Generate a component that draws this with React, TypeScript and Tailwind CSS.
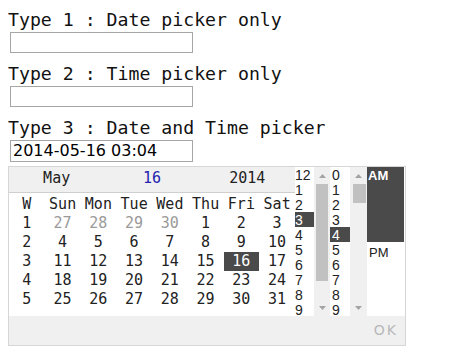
const MONO = "font-['DejaVu_Sans_Mono',monospace]";

const WEEKS = [
  { w: 1, days: [27, 28, 29, 30, 1, 2, 3], muted: 4 },
  { w: 2, days: [4, 5, 6, 7, 8, 9, 10], muted: 0 },
  { w: 3, days: [11, 12, 13, 14, 15, 16, 17], muted: 0 },
  { w: 4, days: [18, 19, 20, 21, 22, 23, 24], muted: 0 },
  { w: 5, days: [25, 26, 27, 28, 29, 30, 31], muted: 0 },
];

const HOURS = ["12", "1", "2", "3", "4", "5", "6", "7", "8", "9"];
const MINUTES = ["0", "1", "2", "3", "4", "5", "6", "7", "8", "9"];

function Arrow({ down }: { down?: boolean }) {
  return (
    <svg width="7" height="4" viewBox="0 0 7 4">
      <path d={down ? "M0 0 L3.5 4 L7 0Z" : "M0 4 L3.5 0 L7 4Z"} fill="#a3a3a3" />
    </svg>
  );
}

function Scrollbar({ width, thumbLeft, thumbWidth, thumbHeight }: { width: string; thumbLeft: string; thumbWidth: string; thumbHeight: string }) {
  return (
    <div className={`flex h-full flex-col bg-[#f0f0f0] ${width}`}>
      <div className="flex h-[17px] items-center justify-center pt-[1px]">
        <Arrow />
      </div>
      <div className="flex-1">
        <div className={`bg-[#c1c1c1] ${thumbLeft} ${thumbWidth} ${thumbHeight}`} />
      </div>
      <div className="flex h-[16px] items-center justify-center pb-[1px]">
        <Arrow down />
      </div>
    </div>
  );
}

function Field({ label, value, tall }: { label: string; value?: string; tall?: boolean }) {
  return (
    <div>
      <div className={`h-[22px] whitespace-nowrap text-[18.2px] leading-[22px] text-[#111] ${MONO}`}>{label}</div>
      <div
        className={`ml-[2px] mt-[1px] w-[183px] border border-[#a6a6a6] bg-white pl-[2px] font-['DejaVu_Sans',sans-serif] text-[16px] leading-[19px] text-black ${tall ? "h-[22px]" : "h-[21px]"}`}
      >
        {value}
      </div>
    </div>
  );
}

export default function App() {
  return (
    <div className="h-[355px] w-[471px] bg-white pl-[8px] pt-[9px]">
      <div className="flex flex-col gap-[10px]">
        <Field label="Type 1 : Date picker only" />
        <Field label="Type 2 : Time picker only" />
        <Field label="Type 3 : Date and Time picker" value="2014-05-16 03:04" tall />
      </div>

      <div className="mt-[4px] w-[398px] border border-[#d6d6d6] bg-white">
        <div className="flex h-[149px]">
          {/* calendar */}
          <div className={`w-[286px] text-[15px] text-[#222] ${MONO}`}>
            <div className="grid h-[26px] grid-cols-3 items-center border-b border-[#cfcfcf] bg-[#f0f0f0] pb-[2px] text-center">
              <span>May</span>
              <span className="text-[#2323b0]">16</span>
              <span>2014</span>
            </div>
            <div className="grid grid-cols-8 pt-[2px] text-center leading-[19px]">
              {["W", "Sun", "Mon", "Tue", "Wed", "Thu", "Fri", "Sat"].map((d) => (
                <div key={d} className="h-[19px]">{d}</div>
              ))}
              {WEEKS.map((row) => (
                <div key={row.w} className="contents">
                  <div className="h-[19px]">{row.w}</div>
                  {row.days.map((d, i) => (
                    <div
                      key={i}
                      className={`h-[19px] ${i < row.muted ? "text-[#9a9a9a]" : ""} ${row.w === 3 && d === 16 ? "bg-[#4a4a4a] text-white" : ""}`}
                    >
                      {d}
                    </div>
                  ))}
                </div>
              ))}
            </div>
          </div>

          {/* hours */}
          <div className="w-[19px] font-['Liberation_Sans',sans-serif] text-[14px] leading-[15px] text-[#222]">
            {HOURS.map((h) => (
              <div key={h} className={`h-[15px] pt-[1px] leading-[14px] ${h === "3" ? "bg-[#4a4a4a] text-white" : ""}`}>{h}</div>
            ))}
          </div>
          <Scrollbar width="w-[16px]" thumbLeft="ml-[2px]" thumbWidth="w-[12px]" thumbHeight="h-[97px]" />

          {/* minutes */}
          <div className="w-[20px] pl-[1px] font-['Liberation_Sans',sans-serif] text-[14px] leading-[15px] text-[#222]">
            {MINUTES.map((m) => (
              <div key={m} className={`h-[15px] pl-[1px] pt-[1px] leading-[14px] ${m === "4" ? "-ml-[1px] bg-[#4a4a4a] pl-[2px] text-white" : ""}`}>{m}</div>
            ))}
          </div>
          <Scrollbar width="w-[17px]" thumbLeft="ml-[3px]" thumbWidth="w-[13px]" thumbHeight="h-[19px]" />

          {/* am / pm */}
          <div className="w-[37px] font-['Liberation_Sans',sans-serif] text-[13px] leading-[15px]">
            <div className="h-[75px] bg-[#4a4a4a] pl-[1px] pt-[1px] font-bold text-white">AM</div>
            <div className="pl-[2px] pt-[3px] text-[#222]">PM</div>
          </div>
        </div>

        <div className="flex h-[29px] items-center justify-end bg-[#f0f0f0] pr-[7px] font-['DejaVu_Sans',sans-serif] text-[14px] tracking-[2px] text-[#b8b8b8]">
          OK
        </div>
      </div>
    </div>
  );
}
